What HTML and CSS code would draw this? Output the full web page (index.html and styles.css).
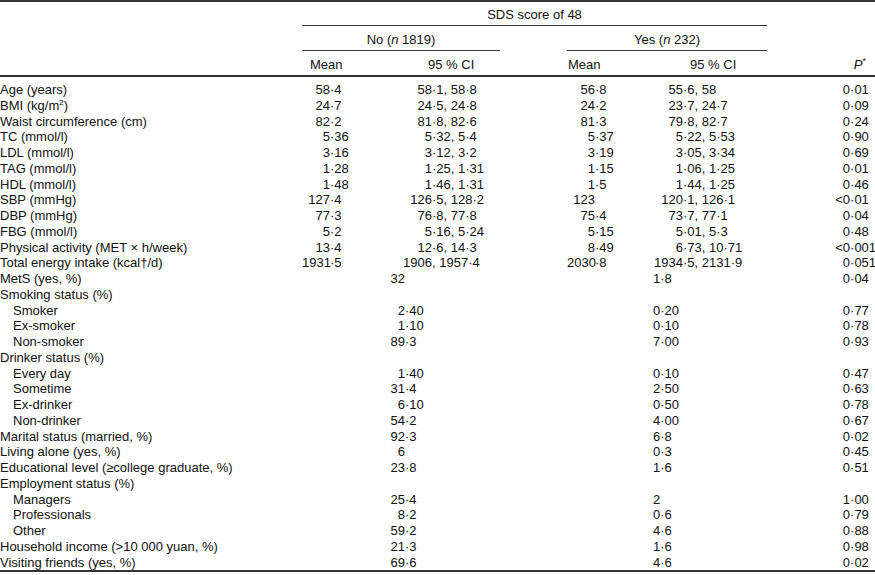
FILE: index.html
```html
<!DOCTYPE html>
<html>
<head>
<meta charset="utf-8">
<link rel="stylesheet" href="styles.css">
</head>
<body>
<table class="t">
<colgroup>
<col class="c-lab"><col class="c-nm"><col class="c-nc"><col class="c-gap"><col class="c-ym"><col class="c-yc"><col class="c-p">
</colgroup>
<thead>
<tr class="h1"><th></th><th colspan="5" class="span">SDS score of 48</th><th></th></tr>
<tr class="h2"><th></th><th colspan="2" class="span">No (<i>n</i> 1819)</th><th></th><th colspan="2" class="span">Yes (<i>n</i> 232)</th><th></th></tr>
<tr class="h3"><th></th><th class="hnm">Mean</th><th class="hnc">95 % CI</th><th></th><th class="hym">Mean</th><th class="hyc">95 % CI</th><th class="hp"><i>P</i><sup>*</sup></th></tr>
</thead>
<tbody>
<tr class="first"><td>Age (years)</td><td class="nm"><span class="ip">58</span>·4</td><td class="nc"><span class="ip">58</span>·1, 58·8</td><td></td><td class="ym"><span class="ip">56</span>·8</td><td class="yc"><span class="ip">55</span>·6, 58</td><td class="p"><span class="ip">0</span>·01</td></tr>
<tr><td>BMI (kg/m<sup>2</sup>)</td><td class="nm"><span class="ip">24</span>·7</td><td class="nc"><span class="ip">24</span>·5, 24·8</td><td></td><td class="ym"><span class="ip">24</span>·2</td><td class="yc"><span class="ip">23</span>·7, 24·7</td><td class="p"><span class="ip">0</span>·09</td></tr>
<tr><td>Waist circumference (cm)</td><td class="nm"><span class="ip">82</span>·2</td><td class="nc"><span class="ip">81</span>·8, 82·6</td><td></td><td class="ym"><span class="ip">81</span>·3</td><td class="yc"><span class="ip">79</span>·8, 82·7</td><td class="p"><span class="ip">0</span>·24</td></tr>
<tr><td>TC (mmol/l)</td><td class="nm"><span class="ip">5</span>·36</td><td class="nc"><span class="ip">5</span>·32, 5·4</td><td></td><td class="ym"><span class="ip">5</span>·37</td><td class="yc"><span class="ip">5</span>·22, 5·53</td><td class="p"><span class="ip">0</span>·90</td></tr>
<tr><td>LDL (mmol/l)</td><td class="nm"><span class="ip">3</span>·16</td><td class="nc"><span class="ip">3</span>·12, 3·2</td><td></td><td class="ym"><span class="ip">3</span>·19</td><td class="yc"><span class="ip">3</span>·05, 3·34</td><td class="p"><span class="ip">0</span>·69</td></tr>
<tr><td>TAG (mmol/l)</td><td class="nm"><span class="ip">1</span>·28</td><td class="nc"><span class="ip">1</span>·25, 1·31</td><td></td><td class="ym"><span class="ip">1</span>·15</td><td class="yc"><span class="ip">1</span>·06, 1·25</td><td class="p"><span class="ip">0</span>·01</td></tr>
<tr><td>HDL (mmol/l)</td><td class="nm"><span class="ip">1</span>·48</td><td class="nc"><span class="ip">1</span>·46, 1·31</td><td></td><td class="ym"><span class="ip">1</span>·5</td><td class="yc"><span class="ip">1</span>·44, 1·25</td><td class="p"><span class="ip">0</span>·46</td></tr>
<tr><td>SBP (mmHg)</td><td class="nm"><span class="ip">127</span>·4</td><td class="nc"><span class="ip">126</span>·5, 128·2</td><td></td><td class="ym"><span class="ip">123</span></td><td class="yc"><span class="ip">120</span>·1, 126·1</td><td class="p"><span class="ip">&lt;0</span>·01</td></tr>
<tr><td>DBP (mmHg)</td><td class="nm"><span class="ip">77</span>·3</td><td class="nc"><span class="ip">76</span>·8, 77·8</td><td></td><td class="ym"><span class="ip">75</span>·4</td><td class="yc"><span class="ip">73</span>·7, 77·1</td><td class="p"><span class="ip">0</span>·04</td></tr>
<tr><td>FBG (mmol/l)</td><td class="nm"><span class="ip">5</span>·2</td><td class="nc"><span class="ip">5</span>·16, 5·24</td><td></td><td class="ym"><span class="ip">5</span>·15</td><td class="yc"><span class="ip">5</span>·01, 5·3</td><td class="p"><span class="ip">0</span>·48</td></tr>
<tr><td>Physical activity (MET × h/week)</td><td class="nm"><span class="ip">13</span>·4</td><td class="nc"><span class="ip">12</span>·6, 14·3</td><td></td><td class="ym"><span class="ip">8</span>·49</td><td class="yc"><span class="ip">6</span>·73, 10·71</td><td class="p"><span class="ip">&lt;0</span>·001</td></tr>
<tr><td>Total energy intake (kcal†/d)</td><td class="nm"><span class="ip">1931</span>·5</td><td class="nc"><span class="ip">1906</span>, 1957·4</td><td></td><td class="ym"><span class="ip">2030</span>·8</td><td class="yc"><span class="ip">1934</span>·5, 2131·9</td><td class="p"><span class="ip">0</span>·051</td></tr>
<tr><td>MetS (yes, %)</td><td></td><td class="np"><span class="ip">32</span></td><td></td><td></td><td class="yp">1·8</td><td class="p"><span class="ip">0</span>·04</td></tr>
<tr><td>Smoking status (%)</td><td></td><td></td><td></td><td></td><td></td><td></td></tr>
<tr><td class="sub">Smoker</td><td></td><td class="np"><span class="ip">2</span>·40</td><td></td><td></td><td class="yp">0·20</td><td class="p"><span class="ip">0</span>·77</td></tr>
<tr><td class="sub">Ex-smoker</td><td></td><td class="np"><span class="ip">1</span>·10</td><td></td><td></td><td class="yp">0·10</td><td class="p"><span class="ip">0</span>·78</td></tr>
<tr><td class="sub">Non-smoker</td><td></td><td class="np"><span class="ip">89</span>·3</td><td></td><td></td><td class="yp">7·00</td><td class="p"><span class="ip">0</span>·93</td></tr>
<tr><td>Drinker status (%)</td><td></td><td></td><td></td><td></td><td></td><td></td></tr>
<tr><td class="sub">Every day</td><td></td><td class="np"><span class="ip">1</span>·40</td><td></td><td></td><td class="yp">0·10</td><td class="p"><span class="ip">0</span>·47</td></tr>
<tr><td class="sub">Sometime</td><td></td><td class="np"><span class="ip">31</span>·4</td><td></td><td></td><td class="yp">2·50</td><td class="p"><span class="ip">0</span>·63</td></tr>
<tr><td class="sub">Ex-drinker</td><td></td><td class="np"><span class="ip">6</span>·10</td><td></td><td></td><td class="yp">0·50</td><td class="p"><span class="ip">0</span>·78</td></tr>
<tr><td class="sub">Non-drinker</td><td></td><td class="np"><span class="ip">54</span>·2</td><td></td><td></td><td class="yp">4·00</td><td class="p"><span class="ip">0</span>·67</td></tr>
<tr><td>Marital status (married, %)</td><td></td><td class="np"><span class="ip">92</span>·3</td><td></td><td></td><td class="yp">6·8</td><td class="p"><span class="ip">0</span>·02</td></tr>
<tr><td>Living alone (yes, %)</td><td></td><td class="np"><span class="ip">6</span></td><td></td><td></td><td class="yp">0·3</td><td class="p"><span class="ip">0</span>·45</td></tr>
<tr><td>Educational level (≥college graduate, %)</td><td></td><td class="np"><span class="ip">23</span>·8</td><td></td><td></td><td class="yp">1·6</td><td class="p"><span class="ip">0</span>·51</td></tr>
<tr><td>Employment status (%)</td><td></td><td></td><td></td><td></td><td></td><td></td></tr>
<tr><td class="sub">Managers</td><td></td><td class="np"><span class="ip">25</span>·4</td><td></td><td></td><td class="yp">2</td><td class="p"><span class="ip">1</span>·00</td></tr>
<tr><td class="sub">Professionals</td><td></td><td class="np"><span class="ip">8</span>·2</td><td></td><td></td><td class="yp">0·6</td><td class="p"><span class="ip">0</span>·79</td></tr>
<tr><td class="sub">Other</td><td></td><td class="np"><span class="ip">59</span>·2</td><td></td><td></td><td class="yp">4·6</td><td class="p"><span class="ip">0</span>·88</td></tr>
<tr><td>Household income (&gt;10 000 yuan, %)</td><td></td><td class="np"><span class="ip">21</span>·3</td><td></td><td></td><td class="yp">1·6</td><td class="p"><span class="ip">0</span>·98</td></tr>
<tr class="last"><td>Visiting friends (yes, %)</td><td></td><td class="np"><span class="ip">69</span>·6</td><td></td><td></td><td class="yp">4·6</td><td class="p"><span class="ip">0</span>·02</td></tr>
</tbody>
</table>
</body>
</html>
```

FILE: styles.css
```css
html, body {
  margin: 0;
  padding: 0;
  background: #fff;
}
body {
  font-family: "Liberation Sans", Arial, Helvetica, sans-serif;
  font-size: 13px;
  color: #111;
}
.t {
  width: 875px;
  border-collapse: collapse;
  table-layout: fixed;
  border-top: 2px solid #333;
  border-bottom: 2px solid #333;
}
.c-lab { width: 302px; }
.c-nm { width: 63px; }
.c-nc { width: 135px; }
.c-gap { width: 67px; }
.c-ym { width: 53px; }
.c-yc { width: 147px; }
.c-p { width: 108px; }

th {
  font-weight: normal;
  line-height: 15px;
  white-space: nowrap;
  padding: 0;
}
.h1 th { padding-top: 5px; padding-bottom: 3px; }
.h2 th { padding-top: 6px; padding-bottom: 3px; }
.h3 th { padding-top: 6px; padding-bottom: 3px; border-bottom: 2px solid #333; }
.span { border-bottom: 1px solid #333; text-align: center; }
.h3 .hnm { text-align: left; padding-left: 8px; }
.h3 .hnc { text-align: left; padding-left: 63px; }
.h3 .hym { text-align: left; padding-left: 1px; }
.h3 .hyc { text-align: left; padding-left: 70px; }
.h3 .hp { text-align: right; padding-right: 9px; }
sup { font-size: 8px; line-height: 0; vertical-align: 5px; }
.hp sup { font-size: 9px; }

td {
  padding: 0;
  line-height: 15.75px;
  white-space: nowrap;
  text-align: left;
}
.first td { padding-top: 5px; }
.sub { padding-left: 13px; }
.ip {
  display: inline-block;
  text-align: right;
}
.nm .ip { width: 28px; }
.nc .ip { width: 67px; }
.np .ip { width: 40px; }
.ym .ip { width: 28px; }
.yc .ip { width: 63px; }
.p .ip { width: 83px; }
.yp { padding-left: 33px; }
```
